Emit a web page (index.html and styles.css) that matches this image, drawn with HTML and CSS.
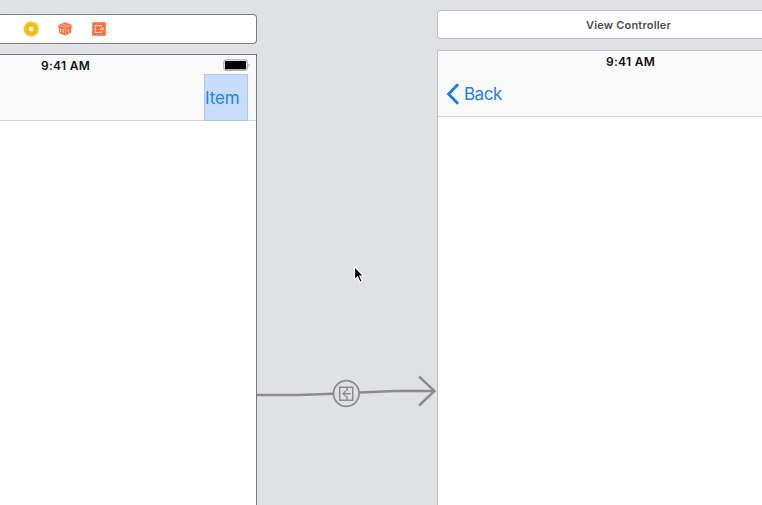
FILE: index.html
```html
<!DOCTYPE html>
<html lang="en">
<head>
<meta charset="utf-8">
<title>Storyboard</title>
<link rel="stylesheet" href="styles.css">
</head>
<body>
<main class="canvas">
  <section class="scene scene-source">
    <header class="dock">
      <svg class="dock-icon" viewBox="0 0 16 16"><circle cx="8.2" cy="8" r="7.6" fill="#f9c51b"/><rect x="4.2" y="4" width="8" height="8" rx="1" fill="none" stroke="#e9ae16"/><rect x="6.2" y="6" width="4" height="4" rx=".8" fill="#fff"/></svg>
      <svg class="dock-icon" viewBox="0 0 16 16"><path d="M1.2 4 8 1.3 14.8 3.8 14 11.6 8.5 14.8 2 12Z" fill="#fa7041"/><path d="M1.3 4.2 8.6 6.4 14.6 4M8.6 6.4V14.5M4.5 2.7 11.5 5.2" fill="none" stroke="#ffc5b0" stroke-width=".7"/><path d="M3.4 7.3v3.6M6 8v3.6M11.4 8v3.5" stroke="#ffe4da" stroke-width="1"/></svg>
      <svg class="dock-icon" viewBox="0 0 16 16"><rect x="1.2" y="1.2" width="13.6" height="13.6" fill="#fa7041"/><path d="M10.3 6V4.5H4.3V11.5H10.3V10M8.7 8H12" fill="none" stroke="#ffd9ca" stroke-width="1.1"/><path d="M11 6 13.2 8 11 10Z" fill="#ffd9ca"/></svg>
    </header>
    <div class="phone">
      <div class="navbar">
        <span class="time">9:41 AM</span>
        <svg class="battery" viewBox="0 0 28 13"><rect x=".8" y=".8" width="23.4" height="10.6" rx="2.8" fill="#fff" stroke="#b0b0b0" stroke-width="1.3"/><rect x="2" y="2" width="21" height="8.2" rx="1" fill="#000"/><path d="M25.6 4.3Q27.4 6.2 25.6 8.1Z" fill="#888"/></svg>
        <div class="bar-item">Item</div>
      </div>
    </div>
  </section>
  <div class="gap">
    <svg class="segue" viewBox="0 0 180 50" fill="none" stroke="#8b8b8c">
      <path d="M0 25H42L76 23.7M103 22.5 138 21H177" stroke-width="2.4"/>
      <path d="M162 6.5 177.5 21 162 35.5" stroke-width="2.4"/>
      <circle cx="89.3" cy="23.5" r="12.8" stroke-width="1.7"/>
      <path d="M82.7 17.3H95.7V30.2H82.7ZM90 17.3V21M90 26.2V30.2M93.8 23.7H86" stroke-width="1.5"/>
      <path d="M88.7 21 86 23.7 88.7 26.4" stroke-width="1.3"/>
    </svg>
    <svg class="cursor" viewBox="0 0 14 20"><path d="M1.5 1.5V14.7L4.5 12 7 17.3 9.2 16.3 6.9 11.2H10.7Z" fill="#000" stroke="#fff" stroke-width="1.2"/></svg>
  </div>
  <section class="scene scene-target">
    <header class="dock"><span class="dock-title">View Controller</span></header>
    <div class="phone">
      <div class="navbar">
        <span class="time">9:41 AM</span>
        <div class="back">
          <svg class="chevron" viewBox="0 0 13 22"><path d="M11.6 1.2 2 11 11.6 20.8" fill="none" stroke="#0a7bff" stroke-width="2.7"/></svg>
          <span>Back</span>
        </div>
      </div>
    </div>
  </section>
</main>
</body>
</html>
```
FILE: styles.css
```css
* { box-sizing: border-box; }
body { margin: 0; font-family: Inter, "Liberation Sans", sans-serif; }
.canvas {
  display: grid;
  grid-template-columns: 257px 180px 325px;
  height: 505px;
  overflow: hidden;
  background: #e0e1e5;
}
.scene { display: flex; flex-direction: column; min-width: 0; }
.scene-source { padding-top: 14px; }
.scene-target { padding-top: 10px; }
.dock {
  display: flex;
  align-items: center;
  flex: none;
  background: #fff;
}
.scene-source .dock {
  height: 30px;
  gap: 18px;
  padding-left: 23px;
  border: 1px solid #7d7e80;
  border-left: 0;
  border-radius: 0 4px 4px 0;
}
.scene-target .dock {
  height: 29px;
  padding: 1px 0 0 148px;
  border: 1px solid #bfc0c2;
  border-right: 0;
  border-radius: 4px 0 0 4px;
}
.dock-icon { width: 16px; height: 16px; }
.dock-title {
  color: #4d4d4d;
  font-size: 11px;
  font-weight: 600;
  letter-spacing: 0.2px;
  white-space: nowrap;
}
.phone { flex: 1; background: #fff; }
.scene-source .phone { margin-top: 10px; border: 1px solid #77787a; border-width: 1px 1px 0 0; }
.scene-target .phone { margin-top: 11px; border: 1px solid #bfc0c2; border-width: 1px 0 0 1px; }
.navbar {
  display: grid;
  grid-template-rows: 20px 46px;
  height: 66px;
  background: #f9f9f9;
  border-bottom: 1px solid #d8d8d9;
}
.time {
  color: #111;
  font-size: 12px;
  font-weight: 600;
  letter-spacing: 0.3px;
  line-height: 22px;
  white-space: nowrap;
}
.scene-source .navbar { grid-template-columns: 204px 44px; }
.scene-source .time { padding-left: 41px; }
.battery { width: 28px; height: 13px; margin: 4px 0 0 19px; }
.bar-item {
  grid-column: 2;
  height: 47px;
  margin-top: -1px;
  border: 1px solid #a3c8fb;
  background: #c8ddfd;
  color: #2680f8;
  font-size: 17px;
  letter-spacing: -0.1px;
  line-height: 46px;
}
.scene-target .time { padding-left: 168px; }
.back {
  display: flex;
  align-items: center;
  gap: 4px;
  padding-left: 8px;
  height: 46px;
  color: #1a7dfa;
  font-size: 17px;
  letter-spacing: -0.5px;
}
.chevron { width: 14px; height: 22px; }
.gap { position: relative; padding-top: 370px; }
.segue { display: block; width: 180px; height: 50px; }
.cursor { position: absolute; left: 96px; top: 265px; width: 14px; height: 20px; }
```
